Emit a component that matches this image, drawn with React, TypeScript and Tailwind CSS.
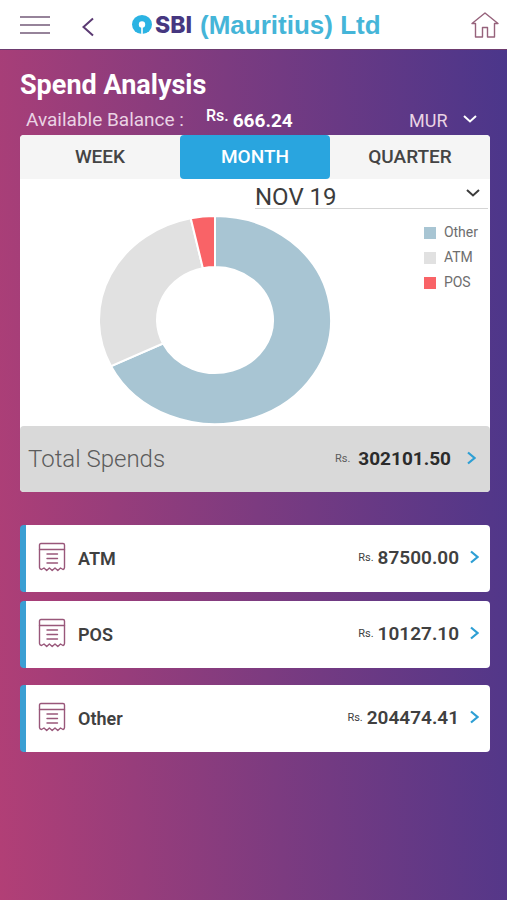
import { useState } from 'react';

interface Spend {
  label: string;
  amount: number;
  color: string;
}

const spends: Spend[] = [
  { label: 'Other', amount: 204474.41, color: '#a8c5d3' },
  { label: 'ATM', amount: 87500, color: '#e1e1e1' },
  { label: 'POS', amount: 10127.1, color: '#f96367' },
];

const total = 302101.5;
const periods = ['WEEK', 'MONTH', 'QUARTER'];

function ChevronDown({ className }: { className: string }) {
  return (
    <svg className={className} viewBox="0 0 14 8" fill="none" stroke="currentColor" strokeWidth="2" aria-hidden="true">
      <path d="M1 1l6 5.5L13 1" />
    </svg>
  );
}

function ChevronRight() {
  return (
    <svg className="w-[9px] h-[14px] mb-[3px] text-[#2e9fd4] shrink-0" viewBox="0 0 9 14" fill="none" stroke="currentColor" strokeWidth="2.2" aria-hidden="true">
      <path d="M1 1.500l6.500 5.500L1 12.500" />
    </svg>
  );
}

function ReceiptIcon() {
  return (
    <svg className="w-[28px] h-[30px] mb-[3px] text-[#99577a] shrink-0" viewBox="0 0 28 30" fill="none" stroke="currentColor" strokeWidth="1.4" strokeLinejoin="round" strokeLinecap="round" aria-hidden="true">
      <path d="M3 1.500h22q1.500 0 1.500 1.500V25.500q0 1.500-1.500 2L22.500 26l-2.700 2.500L17 26l-2.800 2.500L11.400 26l-2.700 2.500L6 26l-2.500 1.500Q1.500 27 1.500 25.500V3q0-1.500 1.500-1.500z" />
      <path d="M1.500 7.500h25M9 12h10.500M9 16.500h10.500M9 21h10.500" />
    </svg>
  );
}

function DonutChart() {
  const point = (share: number, rx: number, ry: number) => {
    const angle = share * 2 * Math.PI;
    return `${116 + rx * Math.sin(angle)} ${104 - ry * Math.cos(angle)}`;
  };
  let start = 0;

  return (
    <svg className="w-[232px] h-[208px]" viewBox="0 0 232 208" role="img" aria-label="Spends by category">
      {spends.map(spend => {
        const from = start;
        const to = from + spend.amount / total;
        start = to;
        const large = to - from > 0.5 ? 1 : 0;
        return (
          <path
            key={spend.label}
            d={`M${point(from, 116, 104)} A116 104 0 ${large} 1 ${point(to, 116, 104)} L${point(to, 58, 53)} A58 53 0 ${large} 0 ${point(from, 58, 53)} Z`}
            fill={spend.color}
            stroke="#fff"
            strokeWidth="2"
          />
        );
      })}
    </svg>
  );
}

function SpendRow({ label, amount }: { label: string; amount: string }) {
  return (
    <button className="w-full h-[67px] flex items-center bg-white rounded-[4px] border-l-6 border-[#3b9fd3] pl-3 pr-[11px] text-[#404040]">
      <ReceiptIcon />
      <span className="ml-3 text-[18px] font-semibold">{label}</span>
      <span className="ml-auto mr-[11px] flex items-center gap-1">
        <span className="text-[11px]">Rs.</span>
        <span className="text-[19px] font-semibold">{amount}</span>
      </span>
      <ChevronRight />
    </button>
  );
}

export default function App() {
  const [period, setPeriod] = useState('MONTH');

  return (
    <div className="min-h-screen flex flex-col font-[Roboto,sans-serif] bg-[linear-gradient(86deg,#b23f76_0%,#7c3b80_50%,#4a368b_100%)]">
      <header className="h-[50px] shrink-0 flex items-center bg-white pl-5 pr-2 border-b border-[#6d3b6f]">
        <button aria-label="Menu" className="text-[#96839a]">
          <svg className="w-[30px] h-[18px]" viewBox="0 0 30 18" fill="none" stroke="currentColor" strokeWidth="1.8">
            <path d="M0 1h30M0 9h30M0 17h30" />
          </svg>
        </button>
        <button aria-label="Back" className="ml-8 pt-1 text-[#5b3a73]">
          <svg className="w-[12px] h-[20px]" viewBox="0 0 12 20" fill="none" stroke="currentColor" strokeWidth="2">
            <path d="M11 1.500L1.500 10 11 18.500" />
          </svg>
        </button>
        <div className="ml-[38px] flex items-center">
          <svg className="w-[20px] h-[19px]" viewBox="0 0 20 19" aria-hidden="true">
            <ellipse cx="10" cy="9.500" rx="10" ry="9.500" fill="#2bb3e3" />
            <circle cx="10" cy="9.500" r="3.200" fill="#fff" />
            <path d="M9.200 9.500h1.600V19H9.200z" fill="#fff" />
          </svg>
          <span className="ml-[3px] font-[Inter,sans-serif] text-[23px] leading-7 font-extrabold text-[#463780]">SBI</span>
          <span className="ml-2 font-['Liberation_Sans',sans-serif] text-[26px] leading-7 font-bold text-[#45b5d8]">(Mauritius) Ltd</span>
        </div>
        <button aria-label="Home" className="ml-auto text-[#96627b]">
          <svg className="w-[28px] h-[26px]" viewBox="0 0 28 26" fill="none" stroke="currentColor" strokeWidth="1.400" strokeLinejoin="round">
            <path d="M14 1L1 11.500h3.500V25h7v-9.500h5V25h7V11.500H27z" />
          </svg>
        </button>
      </header>

      <main className="px-5 pr-[17px] pt-5">
        <h1 className="text-[27px] leading-[30px] font-bold text-white">Spend Analysis</h1>
        <div className="h-[35px] pt-[5px] pl-[6px] pr-[13px] flex items-center text-white">
          <span className="text-[19px] text-[#ead3e4]">Available Balance :</span>
          <span className="ml-[22px] flex items-center gap-1">
            <span className="text-[16px] leading-5 font-medium pb-2">Rs.</span>
            <span className="pt-[3px] text-[19px] font-bold">666.24</span>
          </span>
          <div className="relative ml-auto">
            <select aria-label="Currency" className="appearance-none w-[68px] bg-transparent text-[18px] text-[#ead3e4]">
              <option>MUR</option>
            </select>
            <ChevronDown className="absolute right-0 top-2 w-[14px] h-[8px] pointer-events-none" />
          </div>
        </div>

        <section className="bg-white rounded-[4px]">
          <div role="tablist" className="flex bg-[#f5f5f5] rounded-t-[4px]">
            {periods.map(name => (
              <button
                key={name}
                role="tab"
                aria-selected={period === name}
                onClick={() => setPeriod(name)}
                className={`h-[44px] text-[19px] font-medium rounded-[4px] ${name === 'MONTH' ? 'w-[150px]' : 'flex-1'} ${period === name ? 'bg-[#29a5df] text-white' : 'text-[#444]'}`}
              >
                {name}
              </button>
            ))}
          </div>
          <div className="relative ml-auto mr-[2px] w-[233px] h-[30px] border-b border-[#d5d5d5]">
            <select aria-label="Month" className="appearance-none w-full h-[35px] bg-transparent text-[24px] text-[#3c3c3c]">
              <option>NOV 19</option>
            </select>
            <ChevronDown className="absolute right-[8px] top-[10px] w-[14px] h-[8px] text-[#3c3c3c] pointer-events-none" />
          </div>
          <div className="flex justify-between pt-[7px] pb-[2px] pl-[79px] pr-3">
            <DonutChart />
            <ul className="pt-1 text-[14px] leading-[25px] text-[#6e6e6e]">
              {spends.map(({ label, color }) => (
                <li key={label} className="flex items-center gap-2">
                  <span className="w-[12px] h-[12px]" style={{ backgroundColor: color }} />
                  {label}
                </li>
              ))}
            </ul>
          </div>
          <button className="w-full h-[66px] flex items-center bg-[#d9d9d9] rounded-[4px] pl-2 pr-[14px]">
            <span className="text-[24px] font-light text-[#5c5c5c]">Total Spends</span>
            <span className="ml-auto mr-[16px] flex items-center gap-2 text-[#2b2b2b]">
              <span className="text-[11px] text-[#5c5c5c]">Rs.</span>
              <span className="text-[19px] font-bold">302101.50</span>
            </span>
            <ChevronRight />
          </button>
        </section>

        <div className="mt-[33px] flex flex-col gap-[9px]">
          <SpendRow label="ATM" amount="87500.00" />
          <SpendRow label="POS" amount="10127.10" />
        </div>
        <div className="mt-[17px]">
          <SpendRow label="Other" amount="204474.41" />
        </div>
      </main>
    </div>
  );
}
